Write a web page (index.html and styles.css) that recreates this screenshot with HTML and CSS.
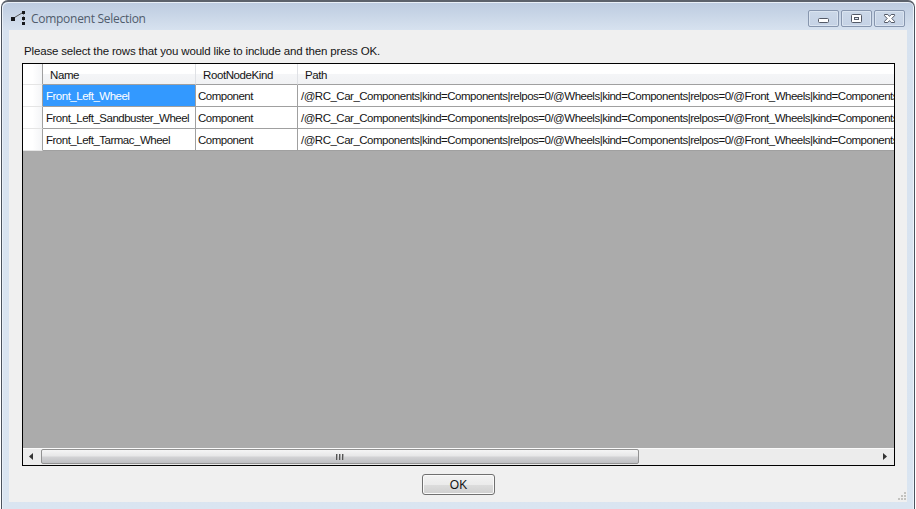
FILE: index.html
```html
<!DOCTYPE html>
<html lang="en">
<head>
<meta charset="utf-8">
<title>Component Selection</title>
<link rel="stylesheet" href="styles.css">
</head>
<body>
<div class="window">
  <header class="titlebar">
    <svg class="app-icon" width="18" height="18" viewBox="0 0 18 18"><path d="M3 9 13 3" stroke="#555" stroke-width="1"/><path d="M14.500 4v11" stroke="#888" stroke-dasharray="1 1"/><path d="M2 7h4v4H2zM13 1h3v3h-3zM13 7h3v3h-3zM13 12h3v3h-3z" fill="#17191c"/></svg>
    <h1 class="title">Component Selection</h1>
    <div class="controls">
      <span class="control"><svg width="29" height="15" viewBox="0 0 29 15"><rect x="9.500" y="7.500" width="10" height="4" rx="1" fill="#fff" stroke="#535966"/></svg></span>
      <span class="control"><svg width="29" height="15" viewBox="0 0 29 15"><rect x="9.500" y="3.500" width="10" height="8" rx="1" fill="#fff" stroke="#535966"/><rect x="12.500" y="6.500" width="4" height="2" fill="#dfe6ef" stroke="#535966"/></svg></span>
      <span class="control"><svg width="29" height="15" viewBox="0 0 29 15"><path d="M9.500 3.500h3.300L14.500 5.400l1.700-1.900h3.300v1.200L16.800 7.500l2.700 2.800v1.200h-3.300l-1.700-1.900-1.700 1.900H9.500v-1.200l2.700-2.800-2.700-2.800z" fill="#fff" stroke="#535966"/></svg></span>
    </div>
  </header>
  <main class="client">
    <p class="prompt">Please select the rows that you would like to include and then press OK.</p>
    <div class="grid">
      <div class="row head"><span></span><span>Name</span><span class="kind">RootNodeKind</span><span>Path</span></div>
      <div class="row"><span></span><span class="selected">Front_Left_Wheel</span><span>Component</span><span class="path">/@RC_Car_Components|kind=Components|relpos=0/@Wheels|kind=Components|relpos=0/@Front_Wheels|kind=Components</span></div>
      <div class="row"><span></span><span>Front_Left_Sandbuster_Wheel</span><span>Component</span><span class="path">/@RC_Car_Components|kind=Components|relpos=0/@Wheels|kind=Components|relpos=0/@Front_Wheels|kind=Components</span></div>
      <div class="row"><span></span><span>Front_Left_Tarmac_Wheel</span><span>Component</span><span class="path">/@RC_Car_Components|kind=Components|relpos=0/@Wheels|kind=Components|relpos=0/@Front_Wheels|kind=Components</span></div>
      <div class="empty"></div>
      <div class="scrollbar">
        <svg class="arrow" width="18" height="16" viewBox="0 0 18 16"><path d="M10 4v7L6 7.500z" fill="#333"/></svg>
        <div class="thumb"><i></i><i></i><i></i></div>
        <svg class="arrow" width="18" height="16" viewBox="0 0 18 16"><path d="M7 4v7l4-3.500z" fill="#333"/></svg>
      </div>
    </div>
    <button class="ok">OK</button>
    <svg class="grip" width="10" height="10" viewBox="0 0 10 10"><path d="M7 0h2v2H7zM4 3h2v2H4zM7 3h2v2H7zM1 6h2v2H1zM4 6h2v2H4zM7 6h2v2H7z" fill="#c3c3c0"/></svg>
  </main>
</div>
</body>
</html>
```
FILE: styles.css
```css
* { box-sizing: border-box; }
body {
  margin: 0;
  height: 509px;
  overflow: hidden;
  background: #fff;
  font: 11.5px/14px "Liberation Sans", sans-serif;
  color: #151515;
}
.window {
  width: 914px;
  height: 516px;
  margin-left: 1px;
  padding: 0 7px;
  border: 1px solid #4b535e;
  border-top: 2px solid #5c626c;
  border-radius: 7px 7px 0 0;
  background: linear-gradient(#bccbe0 0, #d7e2ef 28px, #dae5f1 100%);
  box-shadow: inset 1px 1px #e9f0f8, inset -1px 0 #eef4fa;
}
.titlebar { display: flex; height: 28px; }
.app-icon { margin: 8px 0 0; }
.title {
  margin: 8px 0 0 4px;
  font: 12px/18px "Open Sans", sans-serif;
  color: #505c6c;
  letter-spacing: -0.28px;
}
.controls { display: flex; gap: 2px; margin: 8px 2px 0 auto; }
.control {
  width: 31px;
  height: 17px;
  border: 1px solid #8796ae;
  border-radius: 2px;
  background: linear-gradient(#cbd8e8, #c5d2e5);
  box-shadow: inset 0 0 0 1px #dae4f0;
}
.control svg, .arrow, .grip { display: block; }
.client {
  position: relative;
  height: 472px;
  padding: 14px 12px 0 13px;
  background: #f0f0f0;
}
.prompt { margin: 0 0 5px 2px; white-space: nowrap; letter-spacing: -0.16px; }
.grid {
  display: flex;
  flex-direction: column;
  height: 403px;
  border: 1px solid #000;
  background: #ababab;
}
.row {
  display: grid;
  grid-template-columns: 20px 153px 102px 1fr;
  flex: none;
  height: 22px;
  background: #fff;
  white-space: nowrap;
}
.row span {
  min-width: 0;
  overflow: hidden;
  padding: 4px 0 0 2px;
  border-right: 1px solid #a0a0a0;
  border-bottom: 1px solid #a0a0a0;
  letter-spacing: -0.5px;
}
.row span:nth-child(2) { padding-left: 3px; }
.row span:last-child { border-right: 0; padding-left: 3px; }
.row span:first-child { border-right-color: #a0a0a0; border-bottom-color: #e5e5e5; background: linear-gradient(90deg, #fff 50%, #f4f5f7); }
.head { height: 21px; background: linear-gradient(#fff 45%, #f4f5f7 50%, #f1f2f4); }
.head span { border-right-color: #dfe1e5; }
.head span:nth-child(2), .head span:nth-child(3), .head span:last-child { padding-left: 7px; letter-spacing: -0.4px; }
.row .selected { background: #3399ff; color: #fff; }
.empty { flex: 1; }
.scrollbar { display: flex; height: 17px; background: #ececec; border-top: 1px solid #fafafa; }
.thumb {
  display: flex;
  justify-content: center;
  gap: 1px;
  width: 598px;
  height: 15px;
  margin-right: auto;
  padding-top: 4px;
  border: 1px solid #929292;
  border-radius: 2px;
  background: linear-gradient(#f5f5f5, #e6e6e7 48%, #d3d3d5 52%, #bfc0c3);
}
.thumb i { width: 2px; height: 6px; background: linear-gradient(90deg, #555 50%, #aaa 50%); }
.ok {
  display: block;
  width: 73px;
  height: 21px;
  margin: 8px 0 0 400px;
  padding: 0;
  border: 1px solid #707070;
  border-radius: 3px;
  background: linear-gradient(#f3f3f3, #ebebeb 50%, #dddddd 50%, #cfcfcf);
  box-shadow: inset 0 0 0 1px #fafafa;
  font: 12px/18px "Liberation Sans", sans-serif;
  color: #151515;
}
.grip { position: absolute; right: 0; bottom: 0; }
```
